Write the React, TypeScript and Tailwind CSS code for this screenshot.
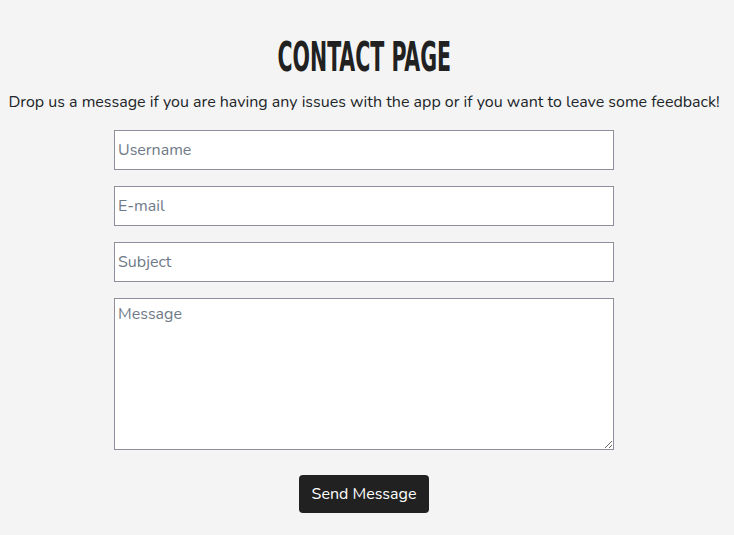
export default function App() {
  return (
    <div className="min-h-[535px] w-[728px] bg-[#f4f4f4] text-[#212529] font-['Nunito','Lato','Open_Sans',sans-serif] flex flex-col items-center pt-[36px] shadow-[6px_0_0_#f4f4f4]">
      <h1 className="inline-block font-['DejaVu_Sans_Condensed','Liberation_Sans',sans-serif] font-bold text-[40px] leading-[42px] text-[#212121] scale-x-[0.57]">
        CONTACT PAGE
      </h1>
      <p className="mt-[13px] text-[16px] leading-[22px]">
        Drop us a message if you are having any issues with the app or if you want to leave some feedback!
      </p>
      <form className="mt-[17px] flex flex-col items-center gap-4">
        <input
          placeholder="Username"
          className="w-[500px] h-[40px] bg-white border border-[#8f8f9d] px-[3px] text-[16px] placeholder:text-[#6f7a87] outline-none"
        />
        <input
          placeholder="E-mail"
          className="w-[500px] h-[40px] bg-white border border-[#8f8f9d] px-[3px] text-[16px] placeholder:text-[#6f7a87] outline-none"
        />
        <input
          placeholder="Subject"
          className="w-[500px] h-[40px] bg-white border border-[#8f8f9d] px-[3px] text-[16px] placeholder:text-[#6f7a87] outline-none"
        />
        <textarea
          placeholder="Message"
          className="w-[500px] h-[152px] bg-white border border-[#8f8f9d] px-[3px] py-[3px] text-[16px] placeholder:text-[#6f7a87] outline-none"
        />
        <button
          type="button"
          className="mt-[9px] w-[130px] h-[38px] rounded-[4px] bg-[#212121] text-white text-[16px]"
        >
          Send Message
        </button>
      </form>
    </div>
  );
}
